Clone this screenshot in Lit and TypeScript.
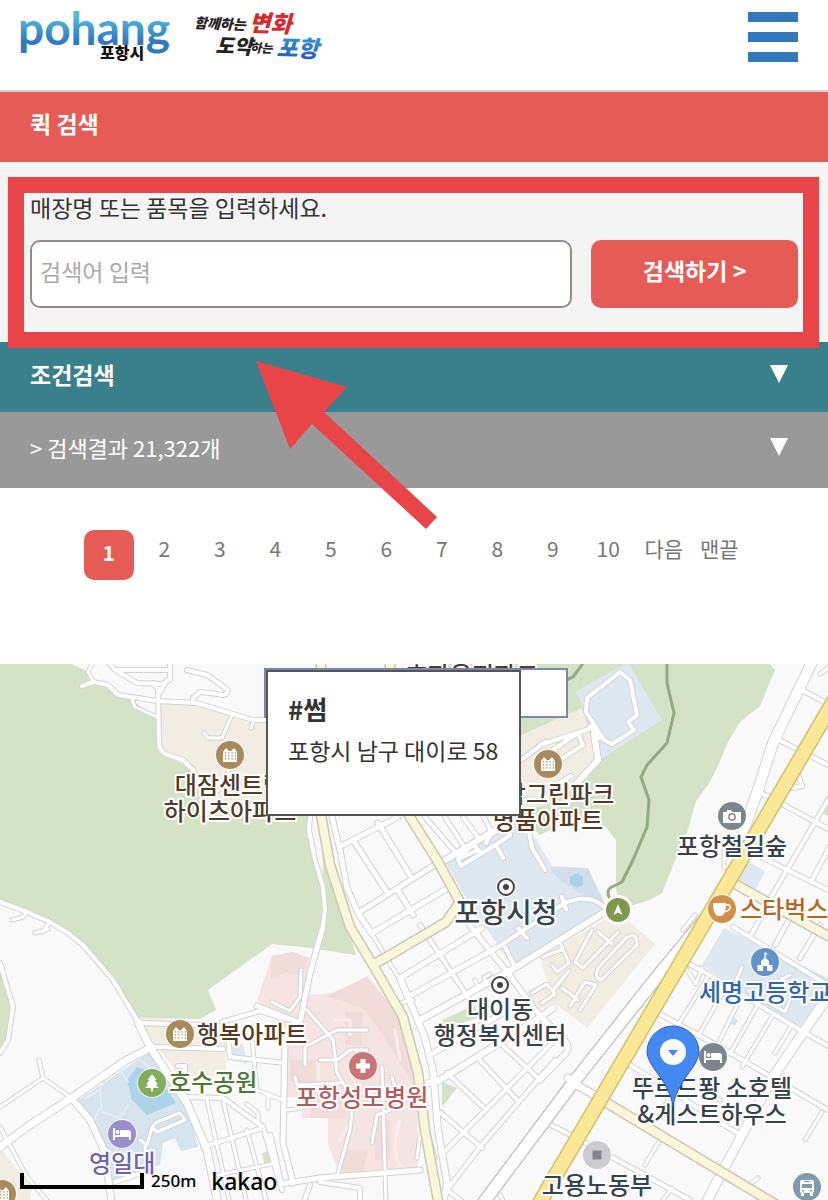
import { LitElement, html, svg, css } from "lit";
import { customElement, property, state } from "lit/decorators.js";

interface Road { d: string; w: number; }
interface Label { x: number; y: number; text: string; tone: string; start?: boolean; }
interface Place { x: number; y: number; kind: string; }

const AREAS: { fill: string; d: string }[] = [
  { fill: "#d4e2c6", d: "M0 664H72L88 672L93 683L108 686L118 696L132 700L156 718L158 746L170 756L188 768L197 782L205 815H310L315 860L323 887L322 815L330 865L356 955L310 948L272 944L208 990L216 1010L200 1019L138 1018L113 980L84 946L66 930L30 912L0 901Z" },
  { fill: "#d4e2c6", d: "M0 965L12 1007L8 1038L0 1050Z" },
  { fill: "#d4e2c6", d: "M440 664H770L775 670L760 706L740 722L728 742L717 768L708 785L696 801L687 833L674 863L662 893L650 900L620 909L616 890V840L605 826L570 820L540 835L521 815L521 718Z" },
  { fill: "#d4e2c6", d: "M828 800L820 812L828 816Z" },
  { fill: "#d4e2c6", d: "M442 1020L475 1005L477 1018L447 1028Z" },
  { fill: "#d4e2c6", d: "M442 1082L457 1088L442 1107Z" },
  { fill: "#d4e2c6", d: "M262 1153L269 1151L271 1164L265 1167Z" },
  { fill: "#f1ede3", d: "M160 703L195 704L267 722V815H218L200 780L185 762L162 750Z" },
  { fill: "#f1ede3", d: "M521 735L582 708L600 760L572 790L545 805L521 812Z" },
  { fill: "#f1ede3", d: "M138 1017L225 1025L226 1076L180 1076L157 1047Z" },
  { fill: "#f1ede3", d: "M0 1148L14 1165L31 1187V1200H0Z" },
  { fill: "#f1ede3", d: "M540 957L618 912L655 944L587 1028L553 1002L535 1012L525 992L547 982Z" },
  { fill: "#dee8f1", d: "M575 692L628 662L662 720L600 760L596 728Z" },
  { fill: "#dee8f1", d: "M445 862L521 820L535 838L552 866L588 868L607 908L513 967L470 905Z" },
  { fill: "#d0dfea", d: "M551 867L588 868L605 905L580 893L562 882L552 872Z" },
  { fill: "#a9d2ea", d: "M577 873L583 877V884L577 888L570 884V877Z" },
  { fill: "#dee8f1", d: "M724 928L828 978V990L800 1032L702 965Z" },
  { fill: "#dee8f1", d: "M747 861L765 871L755 890L737 880Z" },
  { fill: "#d8e5ee", d: "M733 1017L738 1020L735 1026L730 1023Z" },
  { fill: "#d6e4ed", d: "M78 1100L150 1052L187 1105L198 1147L181 1151L175 1138L163 1143L160 1165L112 1184L105 1150Z" },
  { fill: "#abd3ea", d: "M127 1080L137 1067L158 1075L176 1103L147 1115L132 1100Z" },
  { fill: "#dee8f1", d: "M232 1046L243 1044L247 1064L233 1060Z" },
  { fill: "#f6e4e2", d: "M272 956L293 952L310 958L307 995L333 993L367 976L393 1007L410 1047L417 1100L418 1170L340 1175L328 1143V1118H302V1097H287V1030L272 1015L257 1000Z" },
  { fill: "#f2dcda", d: "M272 956L293 952L308 958L303 975L285 973L270 980ZM325 996L367 978L393 1007L410 1047L414 1085L398 1060L380 1030L365 1010L340 1000ZM290 1060H318V1082H290ZM345 1012H362V1045H345ZM310 1095H345V1118H310ZM375 1120H390V1160H375ZM345 1150H368L362 1173H342Z" }
];

const STREETS: Road[] = [
  { w: 4, d: "M82 686L93 682L108 685L118 695L158 701L197 703L253 720H267" },
  { w: 4, d: "M158 688L159 743Q159 752 168 755L183 760L193 770L200 783" },
  { w: 4, d: "M110 664L115 670L137 683L163 684L170 679V664M117 670H170M160 692L153 683M160 692L165 683" },
  { w: 4, d: "M187 670L207 675L228 690Q227 697 218 694L200 692L193 698V703" },
  { w: 3, d: "M92 664L88 672L93 681M132 699L135 707L157 717M232 715L222 738H208L204 733M251 728L254 720M228 758V780M200 800L228 785" },
  { w: 4, d: "M0 902L27 912L50 922L68 933L84 946L113 980L137 1020" },
  { w: 7, d: "M138 1022L150 1047L187 1103L207 1150L218 1204" },
  { w: 3, d: "M12 920L23 917L27 912M42 932L50 922M35 933L48 929" },
  { w: 4, d: "M0 963L13 1007L8 1040L0 1053" },
  { w: 7, d: "M0 1147L27 1127L73 1097L125 1061L152 1047" },
  { w: 3, d: "M0 1107L43 1078L70 1097M43 1078L39 1060M0 1127L27 1177L50 1204" },
  { w: 6, d: "M73 1100L90 1120L104 1150L112 1204" },
  { w: 4, d: "M140 1023L203 1025M157 1047L223 1049M178 1066H185V1078M115 1182L144 1172" },
  { w: 3, d: "M152 1127L157 1122L180 1113L185 1120L157 1132ZM152 1128L147 1145L140 1140M145 1145L146 1160" },
  { w: 4, d: "M222 1022L260 1011L285 1019M227 1027L230 1057L285 1063M187 1097L223 1098L263 1127L282 1190M203 1147L263 1128" },
  { w: 3, d: "M223 1100L247 1204M207 1100L230 1204M247 1130L267 1204M252 1040L257 1090L283 1100M268 1108V1095M218 1175L276 1163M247 1104L258 1113V1122" },
  { w: 5, d: "M322 930L310 973L300 1023L285 1040L283 1143L293 1183M270 1135L281 1184L320 1178L420 1170M300 1023L257 1006" },
  { w: 4, d: "M320 1182L360 1188V1204M310 1185L303 1204" },
  { w: 3, d: "M307 1010L333 1040L337 1073L353 1100L350 1130L338 1173M305 1065V1047L337 1030H367M320 1060H337L350 1050H367M382 1067L386 1204M295 1077L297 1085L340 1083M272 1002L290 1011L300 997L301 970M372 1143L377 1115L390 1110M392 1077L396 1090M287 1110L302 1108M270 1096L285 1101" },
  { w: 4, d: "M310 817L309 830L315 860L323 887L325 910L322 932" },
  { w: 5, d: "M332 817L340 850L347 888L358 913L372 934" },
  { w: 3, d: "M372 934L397 975" },
  { w: 6, d: "M400 978L410 1002L424 1035L433 1070L438 1130L447 1183L443 1204" },
  { w: 5, d: "M343 845L398 817M355 843L387 892M378 823L410 875M358 913L433 866M372 933L448 888M398 890L413 915" },
  { w: 4, d: "M420 925L468 997M425 817L455 852M445 817L463 845M463 817L478 837M483 815L490 830" },
  { w: 6, d: "M442 862L497 829L515 820" },
  { w: 4, d: "M458 859L478 850L474 845L463 853L458 859L461 866L500 842L510 835M474 845L480 852M486 843L490 835L508 826M496 845L503 858M529 832L532 848L545 870" },
  { w: 5, d: "M400 978L482 928M408 997L498 947M468 923L508 973L535 1010L560 1036Q572 1045 566 1053L540 1080M433 1053L503 1013" },
  { w: 6, d: "M418 1021L513 969L608 910M425 1084L440 1080L533 1022L553 1008" },
  { w: 4, d: "M498 947L565 903Q588 893 603 906M562 897L566 909M518 928L527 938M505 947L515 967" },
  { w: 4, d: "M443 1153L552 1043M447 1073L483 1107M477 1057L517 1100M500 1043L540 1080M441 1113L482 1148M555 1060L480 1147L447 1190L465 1204" },
  { w: 3, d: "M413 1000L400 1003M475 980L479 988M486 985L484 977L490 974M420 1135L417 1158M430 1140L435 1158M500 1195L505 1204" },
  { w: 4, d: "M587 698L620 672L630 680L637 715L628 722L634 730L612 744L604 740L586 712ZM590 726L600 738" },
  { w: 6, d: "M594 734L598 760L575 785" },
  { w: 4, d: "M553 750L578 733L583 745L560 760ZM540 745L592 728M553 787L571 776M521 760L545 742" },
  { w: 3, d: "M543 957L563 949L569 963L557 972M563 949L559 940M557 972L552 965M592 930L575 962L583 968L618 932M598 932L612 944M601 980L637 945Q637 932 627 937L598 968Q594 978 601 980M532 993L547 984L555 994L542 1003M553 990L569 971M562 988L578 1000M570 1006L585 982L596 985L580 1010" },
  { w: 10, d: "M814 658L773 743L757 793L743 832" },
  { w: 9, d: "M832 990L773 1077L727 1163L702 1210" },
  { w: 3, d: "M724 840V868M683 930L695 915M825 715L795 765M828 668L820 674" },
  { w: 4, d: "M802 690L832 706M779 740L832 767M758 791L832 831M757 855L832 892M832 793L770 899M832 842L811 882M798 775L802 786L792 788" },
  { w: 4, d: "M687 963L710 975L800 1030L832 1048M658 1013L720 1047L828 1110M627 1063L737 1133M547 1123L590 1145L690 1200M733 927L828 985M750 937L762 915M775 945L790 918M800 958L820 925" },
  { w: 3, d: "M687 970L696 984L702 968M709 975L680 1022M727 985L698 1036M741 997L718 1044M757 1006L730 1054M773 1015L742 1067M742 967L735 983M775 1053L790 1028M805 1140L822 1112M660 1140L645 1165M680 1080L665 1105M748 990L785 1012L790 1000M770 1003L780 980L790 975M660 1204L672 1188M750 1184L758 1178M700 1090L720 1100" }
];

const RAIL = "M704 920L660 973L573 1083L540 1127L478 1210";
const RAIL_LINKS = "M660 972L670 978M568 1078L575 1084L610 1104";
const PALE_ROADS = [
  "M321 655V815L330 865L350 927L373 965L403 1017L418 1073L425 1130L439 1206",
  "M390 655V775L410 817L437 860L460 902L446 922L373 965",
  "M607 1103L665 1138L775 1204",
  "M735 884L828 936"
];
const MAIN_ROAD = "M838 694L700 930L547 1190L535 1212";
const TRAIL = "M667 664L667 683L674 713L667 743L647 765L641 777L649 800L647 827L633 860L622 882L610 888Q606 892 610 899M584 662L573 677L566 680";

const PLACES: Place[] = [
  { x: 230, y: 755, kind: "apt" },
  { x: 548, y: 764, kind: "apt" },
  { x: 180, y: 1034, kind: "apt" },
  { x: 2, y: 1194, kind: "apt" },
  { x: 732, y: 816, kind: "camera" },
  { x: 618, y: 910, kind: "peak" },
  { x: 722, y: 909, kind: "cafe" },
  { x: 765, y: 962, kind: "school" },
  { x: 506, y: 887, kind: "office" },
  { x: 500, y: 985, kind: "office" },
  { x: 363, y: 1066, kind: "hospital" },
  { x: 152, y: 1083, kind: "park" },
  { x: 122, y: 1134, kind: "hotel" },
  { x: 713, y: 1057, kind: "lodge" },
  { x: 597, y: 1155, kind: "civic" },
  { x: 807, y: 1187, kind: "bus" }
];

const LABELS: Label[] = [
  { x: 472, y: 684, text: "효자웅진파트", tone: "brown" },
  { x: 230, y: 794, text: "대잠센트럴", tone: "brown" },
  { x: 230, y: 820, text: "하이츠아파트", tone: "brown" },
  { x: 548, y: 803, text: "대잠그린파크", tone: "brown" },
  { x: 548, y: 829, text: "명품아파트", tone: "brown" },
  { x: 732, y: 855, text: "포항철길숲", tone: "slate" },
  { x: 740, y: 918, text: "스타벅스", tone: "orange", start: true },
  { x: 506, y: 923, text: "포항시청", tone: "slate big" },
  { x: 699, y: 1001, text: "세명고등학교", tone: "blue", start: true },
  { x: 500, y: 1018, text: "대이동", tone: "slate" },
  { x: 500, y: 1044, text: "행정복지센터", tone: "slate" },
  { x: 197, y: 1043, text: "행복아파트", tone: "brown", start: true },
  { x: 169, y: 1091, text: "호수공원", tone: "green", start: true },
  { x: 362, y: 1106, text: "포항성모병원", tone: "rose" },
  { x: 89, y: 1172, text: "영일대", tone: "violet", start: true },
  { x: 712, y: 1097, text: "뚜르드퐝 소호텔", tone: "slate" },
  { x: 712, y: 1123, text: "&게스트하우스", tone: "slate" },
  { x: 597, y: 1194, text: "고용노동부", tone: "slate" }
];

const COLORS: Record<string, string> = {
  apt: "#a98a5c", camera: "#7b878d", peak: "#7d994c", cafe: "#d1914a", school: "#6292cc",
  hospital: "#c97476", park: "#83ad5c", hotel: "#9a8ed1", lodge: "#7b878d", civic: "#cbcbd0", bus: "#7e9aac"
};

const bed = svg`<path fill="#fff" d="M-9-6h2v7H9v5H7V3H-7v3h-2zM-2-4H6Q9-4 9-1V1H-2z"/><circle cx="-4.500" cy="-2" r="2" fill="#fff"/>`;

const GLYPHS: Record<string, unknown> = {
  apt: svg`<path fill="#fff" d="M-7-3L-4-7L-1-4L1-4L4-7L7-3V7H-7z"/><path stroke="#a98a5c" stroke-width="1.300" stroke-dasharray="1.300 2" d="M-5.200-2.200H6M-5.200 .8H6M-5.200 3.800H6"/>`,
  camera: svg`<path fill="#fff" d="M-9-4H-5V-6H-1L0-4H9V7H-9z"/><circle cy="1" r="3.200" fill="none" stroke="#7b878d" stroke-width="1.500"/>`,
  peak: svg`<path fill="#fff" d="M0-6L4.500 5L0 2.500L-4.500 5z"/>`,
  cafe: svg`<path fill="#fff" d="M-9-6H4Q4 6-1 7H-4Q-9 6-9-6z"/><path fill="none" stroke="#fff" stroke-width="1.600" d="M3-4Q9-5 8-1Q7 2 2 3"/>`,
  school: svg`<path fill="#fff" d="M-.5-10L3-8L.8-7V-4L4-1V3H7.500V9H2V4H-2V9H-7.500V3H-4V-1L-.6-4z"/>`,
  hospital: svg`<path fill="#fff" d="M-2.500-7H2.500V-2.500H7V2.500H2.500V7H-2.500V2.500H-7V-2.500H-2.500z"/>`,
  park: svg`<path fill="#fff" d="M0-9L4.500-3H2.500L6 1.500H3.500L7 5H1V8.500H-1V5H-7L-3.500 1.500H-6L-2.500-3H-4.500z"/>`,
  hotel: bed,
  lodge: bed,
  civic: svg`<rect x="-4.500" y="-4.500" width="9" height="9" fill="#7b878d"/>`,
  bus: svg`<rect x="-7" y="-7" width="14" height="13" rx="2" fill="#fff"/><path fill="#fff" d="M-6 5h3v4h-3zM3 5h3v4H3z"/><path fill="#7e9aac" d="M-5-3H5V1H-5zM-5 3h2v1.500h-2zM3 3h2v1.500H3zM-3-6H3v1H-3z"/>`
};

@customElement("site-header")
class SiteHeader extends LitElement {
  static styles = css`
    :host { display: block; background: #fff; border-bottom: 2px solid #d0d0d0; }
    .bar { display: flex; justify-content: space-between; align-items: flex-start; height: 78px; padding: 12px 30px 0 20px; }
    .logo { display: block; overflow: visible; }
    .word { font-family: Lato, sans-serif; font-weight: 700; font-size: 46px; }
    .ko { font-family: "Noto Sans CJK KR", sans-serif; font-weight: 900; }
    .brush { font-style: italic; }
    .s12 { font-size: 12px; } .s14 { font-size: 14px; } .s16 { font-size: 16px; }
    .s20 { font-size: 20px; } .s23 { font-size: 23px; }
    .menu { display: flex; flex-direction: column; gap: 10px; width: 50px; padding: 0; border: 0; background: none; cursor: pointer; }
    .line { height: 10px; background: #3278bf; }
  `;
  render() {
    return html`<header class="bar">
      <a href="#" aria-label="포항시">
        <svg class="logo" width="304" height="54" viewBox="20 10 304 54">
          <defs>
            <linearGradient id="sky" x1="0" y1="0" x2="0" y2="1"><stop offset=".3" stop-color="#4fbbe0"/><stop offset=".75" stop-color="#2f78c2"/></linearGradient>
            <linearGradient id="sea" x1="0" y1="0" x2="0" y2="1"><stop offset="0" stop-color="#36a5e0"/><stop offset="1" stop-color="#2354b0"/></linearGradient>
          </defs>
          <text class="word" x="18" y="43" fill="url(#sky)">pohang</text>
          <text class="ko s16" x="100" y="57" fill="#111">포항시</text>
          <g transform="rotate(2 220 30)">
            <text class="ko brush s14" x="194" y="27" fill="#222">함께하는</text>
            <text class="ko brush s23" x="249" y="28" fill="#d8292f">변화</text>
            <text class="ko brush s20" x="216" y="51" fill="#222">도약</text>
            <text class="ko brush s12" x="251" y="49" fill="#222">하는</text>
            <text class="ko brush s23" x="277" y="52" fill="url(#sea)">포항</text>
          </g>
        </svg>
      </a>
      <button class="menu" type="button" aria-label="메뉴"><span class="line"></span><span class="line"></span><span class="line"></span></button>
    </header>`;
  }
}

@customElement("store-search")
class StoreSearch extends LitElement {
  @state() private term = "";
  static styles = css`
    :host { display: block; }
    .title { margin: 0; padding: 0 30px 8px; background: #e75b56; color: #fff; font-size: 23px; line-height: 62px; font-weight: 700; }
    .panel { position: relative; padding: 28px 30px 34px; background: #f4f4f4; }
    .label { display: block; margin-bottom: 16px; color: #333; line-height: 34px; }
    .row { display: flex; gap: 19px; height: 68px; }
    .field { flex: 1; min-width: 0; box-sizing: border-box; padding: 0 8px 6px; border: 2px solid #998a8a; border-radius: 10px; background: #fff; color: #333; font: inherit; }
    .field::placeholder { color: #aaa; opacity: 1; }
    .go { width: 207px; padding: 0 0 8px; border: 0; border-radius: 10px; background: #e75b56; color: #fff; font: inherit; font-weight: 700; cursor: pointer; }
    .frame { position: absolute; inset: 15px 9px -6px 8px; border: 16px solid #e94549; pointer-events: none; z-index: 2; }
  `;
  render() {
    return html`<h2 class="title">퀵 검색</h2>
      <form class="panel" @submit=${(e: Event) => e.preventDefault()}>
        <label class="label" for="term">매장명 또는 품목을 입력하세요.</label>
        <div class="row">
          <input class="field" id="term" type="text" placeholder="검색어 입력" .value=${this.term}
            @input=${(e: Event) => (this.term = (e.target as HTMLInputElement).value)} />
          <button class="go" type="submit">검색하기 &gt;</button>
        </div>
        <div class="frame"></div>
      </form>`;
  }
}

@customElement("fold-bar")
class FoldBar extends LitElement {
  @property() tone = "teal";
  static styles = css`
    :host { display: block; }
    .bar { display: flex; align-items: center; justify-content: space-between; width: 100%; padding: 0 40px 6px 30px; border: 0; color: #fff; font: inherit; text-align: left; cursor: pointer; }
    .teal { background: #3a808c; font-weight: 700; line-height: 64px; }
    .gray { background: #999; font-size: 22px; line-height: 70px; }
    .mark { display: block; }
  `;
  render() {
    return html`<button class="bar ${this.tone}" type="button"><slot></slot>
      <svg class="mark" width="18" height="18" viewBox="0 0 18 18"><path fill="#fff" d="M0 0H18L9 18z"/></svg></button>`;
  }
}

@customElement("page-links")
class PageLinks extends LitElement {
  static styles = css`
    :host { display: block; padding: 42px 20px 84px; background: #fff; }
    .list { display: grid; grid-template-columns: repeat(12, 1fr); justify-items: center; max-width: 666px; margin: 0 auto; }
    .page { width: 50px; height: 50px; border-radius: 10px; color: #777; font-size: 21px; line-height: 36px; text-align: center; text-decoration: none; white-space: nowrap; }
    .now { background: #e75b56; color: #fff; font-weight: 700; line-height: 44px; }
  `;
  render() {
    const items = ["1", "2", "3", "4", "5", "6", "7", "8", "9", "10", "다음", "맨끝"];
    return html`<nav class="list" aria-label="페이지">${items.map((t, i) =>
      html`<a class="page ${i === 0 ? "now" : ""}" href="#">${t}</a>`)}</nav>`;
  }
}

@customElement("store-map")
class StoreMap extends LitElement {
  static styles = css`
    :host { position: relative; display: flex; flex-direction: column; overflow: hidden; background: #f9f9f9; }
    .canvas { display: block; flex: 1 1 0; width: 100%; min-height: 0; }
    .name { font-family: "Noto Sans CJK KR", sans-serif; font-size: 24px; font-weight: 500; text-anchor: middle; paint-order: stroke; stroke: #fff; stroke-width: 4px; stroke-linejoin: round; }
    .start { text-anchor: start; }
    .big { font-size: 28px; }
    .brown { fill: #503b2a; } .slate { fill: #37434c; } .orange { fill: #b8661c; } .blue { fill: #2f66b0; }
    .green { fill: #4a7837; } .rose { fill: #b35c5f; } .violet { fill: #7062b8; }
    .under, .card { position: absolute; box-sizing: border-box; background: #fff; }
    .under { left: calc(50% - 150px); top: 4px; width: 304px; height: 50px; border: 2px solid #7d86ad; }
    .card { left: calc(50% - 148px); top: 6px; width: 255px; height: 146px; padding: 16px 20px; border: 2px solid #555; color: #333; white-space: nowrap; }
    .shop { margin: 0; font-size: 26px; line-height: 42px; font-weight: 700; }
    .addr { margin: 0; font-size: 23px; line-height: 40px; }
    .foot { position: absolute; left: 20px; bottom: 4px; display: flex; align-items: center; gap: 7px; color: #000; font-family: "Noto Sans", sans-serif; font-weight: 500; line-height: 30px; }
    .rule { width: 116px; height: 12px; border: 4px solid #000; border-top: 0; }
    .scale { font-size: 17px; }
    .brand { margin-left: 8px; font-size: 23px; }
  `;
  private badge(p: Place) {
    if (p.kind === "office") {
      return svg`<g transform="translate(${p.x} ${p.y})"><circle r="10" fill="#fff"/><circle r="8" fill="#fff" stroke="#444" stroke-width="2"/><circle r="3" fill="#444"/></g>`;
    }
    return svg`<g transform="translate(${p.x} ${p.y})"><circle r="15" fill="#fff" opacity=".9"/><circle r=${p.kind === "peak" ? 12 : 14} fill=${COLORS[p.kind]}/>${GLYPHS[p.kind]}</g>`;
  }
  render() {
    return html`<svg class="canvas" viewBox="0 664 828 536" preserveAspectRatio="xMidYMin slice" role="img" aria-label="포항시 지도">
        ${AREAS.map(a => svg`<path d=${a.d} fill=${a.fill}/>`)}
        <g fill="none" stroke-linecap="round" stroke-linejoin="round">
          <path d="M85 1098L100 1090L106 1075M100 1090L102 1112L120 1118L128 1105M94 1120L100 1108M120 1070L128 1082M140 1060L150 1068" stroke="#e4edf4" stroke-width="2"/>
          <path d="M335 1020H350V1035M318 1062V1080M395 1030L400 1060M400 1120Q390 1150 400 1165M350 1120L340 1140" stroke="#f9eeed" stroke-width="3"/>
          ${STREETS.map(r => svg`<path d=${r.d} stroke="#d2d2d2" stroke-width=${r.w + 2}/>`)}
          ${STREETS.map(r => svg`<path d=${r.d} stroke="#fff" stroke-width=${r.w}/>`)}
          <path d=${RAIL} stroke="#c8c8c8" stroke-width="14"/>
          <path d=${RAIL_LINKS} stroke="#c8c8c8" stroke-width="9"/>
          <path d=${RAIL} stroke="#fff" stroke-width="11"/>
          <path d=${RAIL_LINKS} stroke="#fff" stroke-width="7"/>
          <path d=${TRAIL} stroke="#93a982" stroke-width="3"/>
          ${PALE_ROADS.map(d => svg`<path d=${d} stroke="#cdc8b4" stroke-width="11"/>`)}
          ${PALE_ROADS.map(d => svg`<path d=${d} stroke="#f9f6da" stroke-width="8"/>`)}
          <path d=${MAIN_ROAD} stroke="#d3c06c" stroke-width="16"/>
          <path d=${MAIN_ROAD} stroke="#fbe896" stroke-width="13"/>
        </g>
        ${PLACES.map(p => this.badge(p))}
        ${LABELS.map(l => svg`<text class="name ${l.tone} ${l.start ? "start" : ""}" x=${l.x} y=${l.y}>${l.text}</text>`)}
        <path d="M673 1106Q671 1092 658 1074Q647 1060 647 1052A26 26 0 0 1 699 1052Q699 1060 688 1074Q675 1092 673 1106z" fill="#4489f2" stroke="#2f5cc0"/>
        <circle cx="673" cy="1052" r="13" fill="#fff"/>
        <path d="M668 1050H678L673 1056z" fill="#4489f2"/>
      </svg>
      <div class="under"></div>
      <article class="card"><h3 class="shop">#썸</h3><p class="addr">포항시 남구 대이로 58</p></article>
      <div class="foot"><span class="rule"></span><span class="scale">250m</span><span class="brand">kakao</span></div>`;
  }
}

@customElement("app-root")
class AppRoot extends LitElement {
  static styles = css`
    :host { position: relative; display: flex; flex-direction: column; min-height: 100vh; background: #fff; color: #333; font-family: "Noto Sans CJK KR", sans-serif; font-size: 23px; }
    .map { flex: 1 0 400px; }
    .pointer { position: absolute; left: 256px; top: 361px; z-index: 3; pointer-events: none; }
  `;
  render() {
    return html`<site-header></site-header>
      <store-search></store-search>
      <fold-bar tone="teal">조건검색</fold-bar>
      <fold-bar tone="gray">&gt; 검색결과 21,322개</fold-bar>
      <page-links></page-links>
      <store-map class="map"></store-map>
      <svg class="pointer" width="182" height="170" viewBox="0 0 182 170"><path fill="#e94549" d="M0 0L91 26L68 51L181 156L170 168L56 63L34 88z"/></svg>`;
  }
}
